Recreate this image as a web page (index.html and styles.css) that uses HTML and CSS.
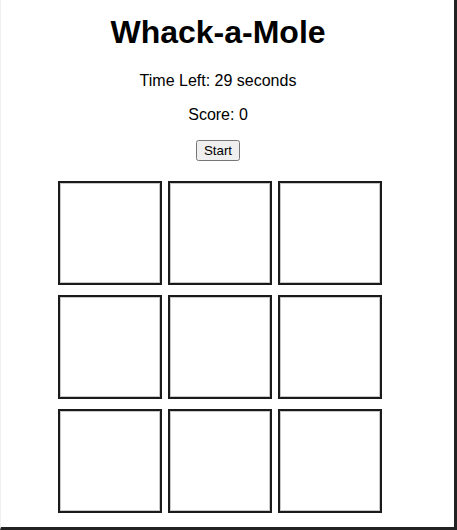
FILE: index.html
```html
<!DOCTYPE HTML>
<html>

<head>
  <meta charset="utf-8">
  <link rel="stylesheet" href="styles.css">
</head>

<body>
  <div class="frame">
    <div class="page">
      <h1 class="title">Whack-a-Mole</h1>
      <p class="info">Time Left: <span id="time">29</span> seconds</p>
      <p class="info">Score: <span id="score">0</span></p>
      <div class="controls">
        <button id="start" class="start">Start</button>
      </div>

      <div class="board" id="board">
        <div class="hole"></div>
        <div class="hole"></div>
        <div class="hole"></div>
        <div class="hole"></div>
        <div class="hole"></div>
        <div class="hole"></div>
        <div class="hole"></div>
        <div class="hole"></div>
        <div class="hole"></div>
      </div>
    </div>
  </div>
</body>
</html>
```

FILE: styles.css
```css
html, body {
  margin: 0;
  padding: 0;
  background: #fff;
}

.frame {
  width: 457px;
  height: 530px;
  box-sizing: border-box;
  border-left: 1px solid #f0f0f0;
  border-right: 3px solid #222;
  border-bottom: 3px solid #222;
  overflow: hidden;
}

.page {
  width: 437px;
  padding-top: 14px;
  font-family: "Liberation Sans", Arial, sans-serif;
  color: #000;
  text-align: center;
}

.title {
  font-size: 32px;
  font-weight: bold;
  margin: 0 0 21px;
  padding-right: 3px;
}

.info {
  font-size: 16px;
  margin: 16px 0;
  padding-right: 3px;
}

.controls {
  display: flex;
  justify-content: center;
  padding-right: 3px;
}

.start {
  font: 13.33px "Liberation Sans", Arial, sans-serif;
}

.board {
  display: grid;
  grid-template-columns: repeat(3, 104px);
  column-gap: 6px;
  row-gap: 10px;
  justify-content: center;
  margin-top: 20px;
}

.hole {
  width: 104px;
  height: 104px;
  box-sizing: border-box;
  border: 2px solid #1a1a1a;
  box-shadow: inset 0 0 0 1px #c8c8c8;
  background: #fff;
}
```
